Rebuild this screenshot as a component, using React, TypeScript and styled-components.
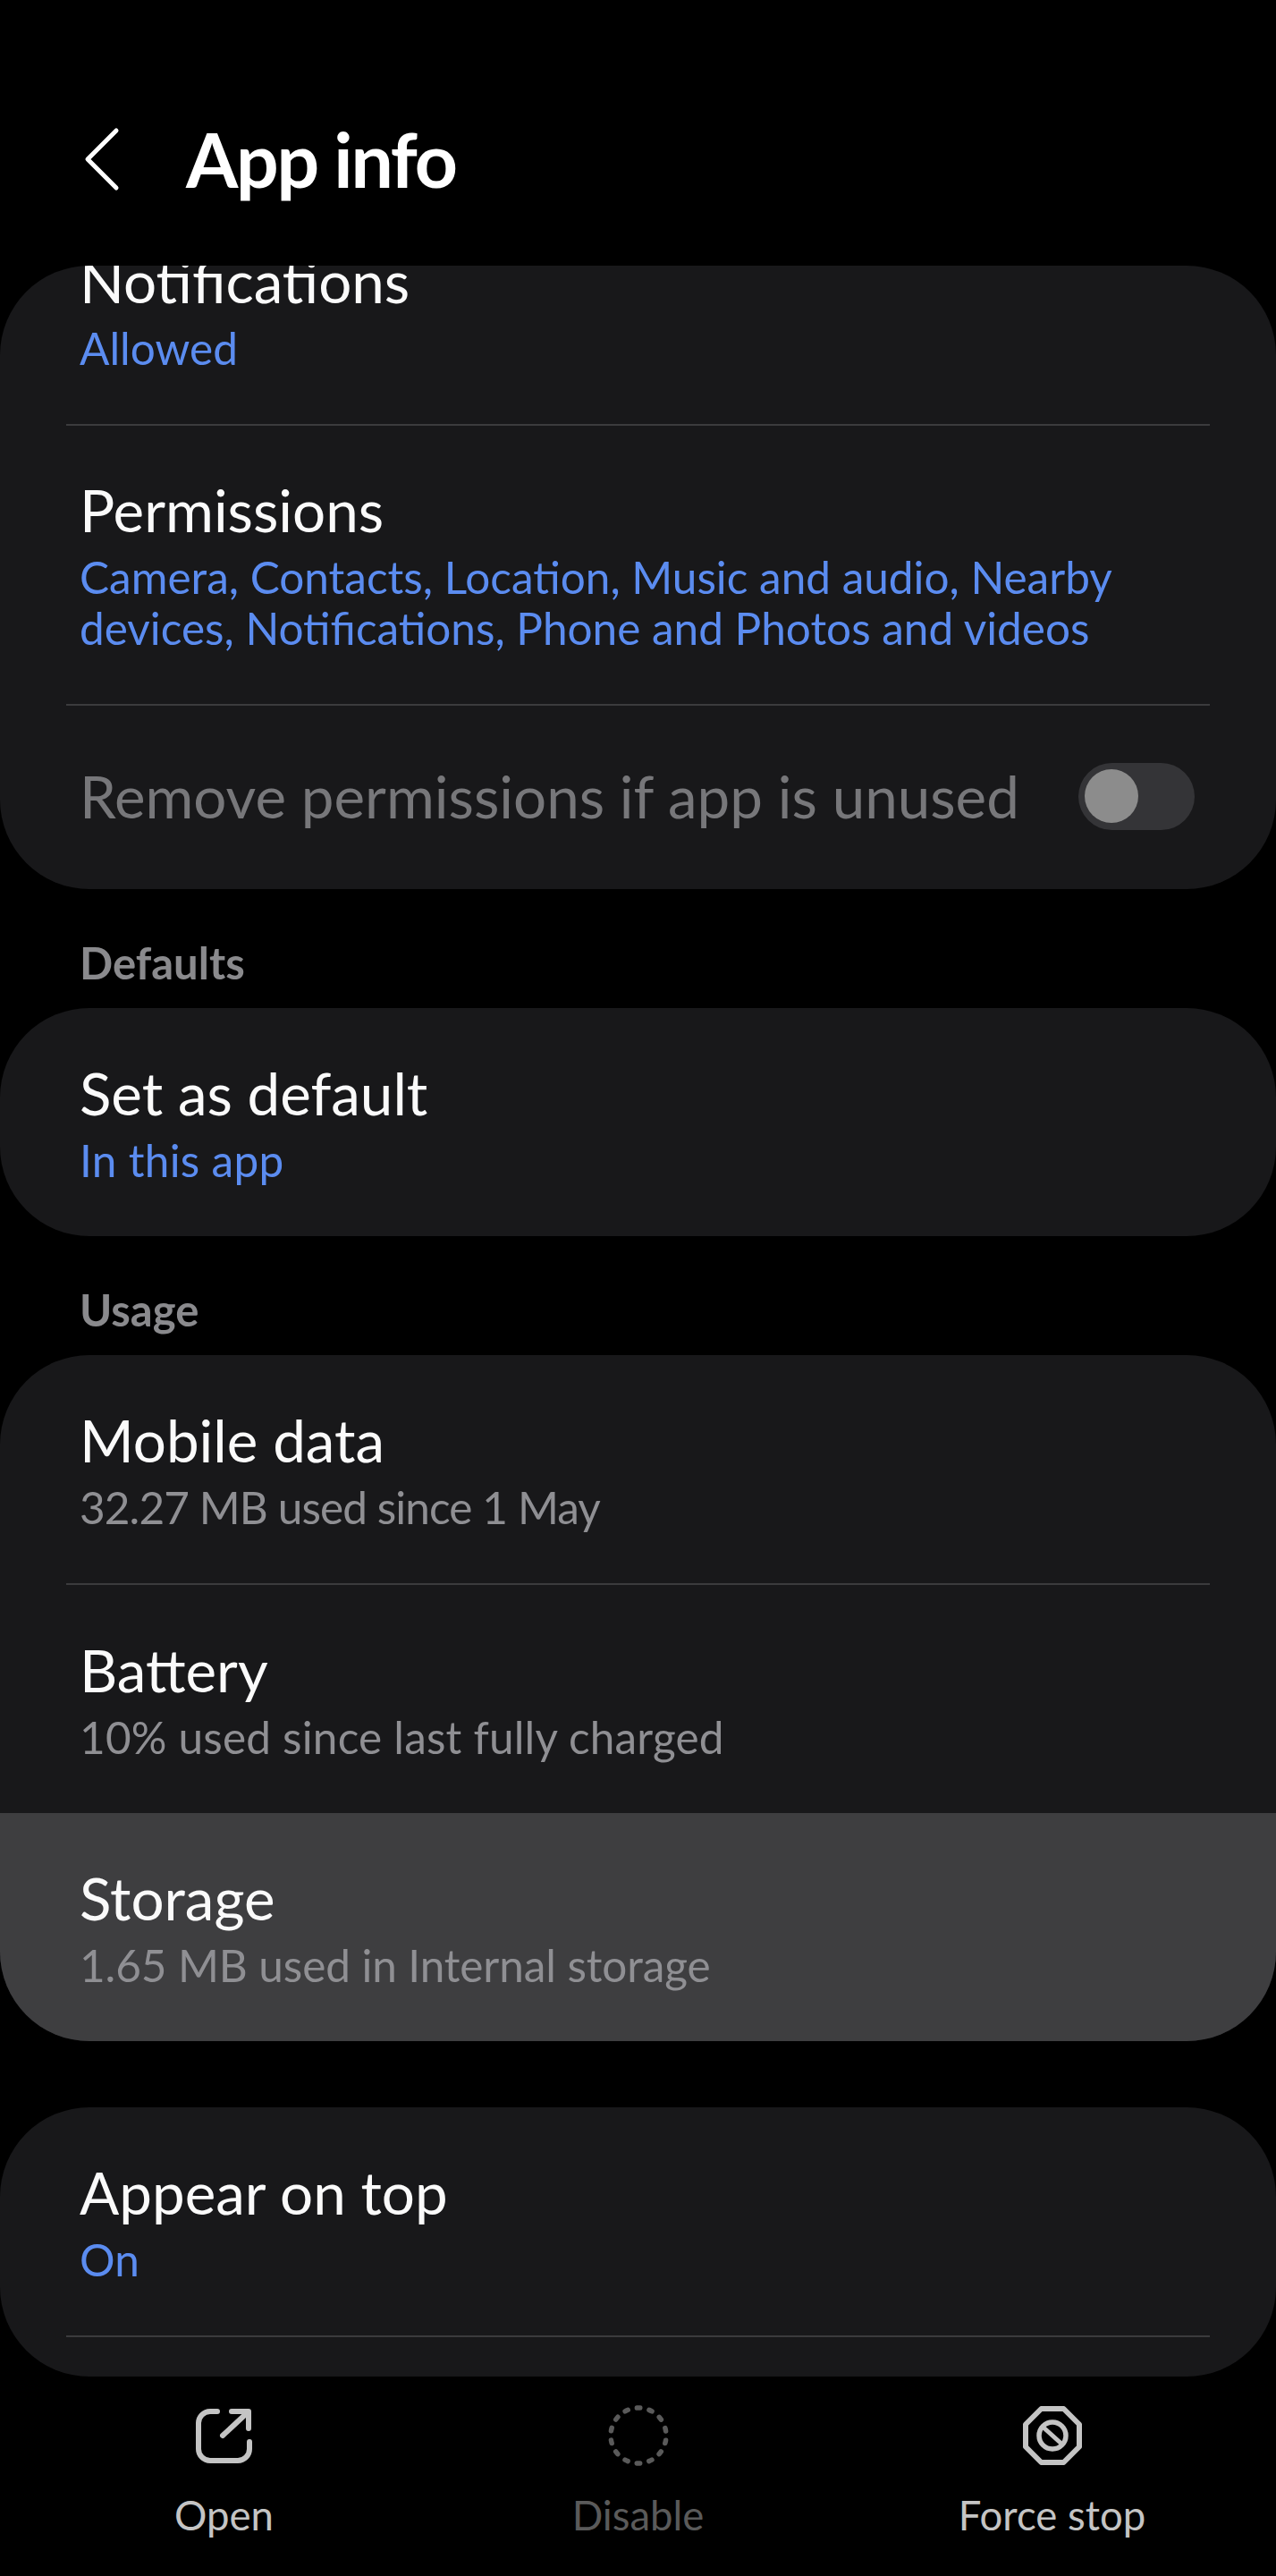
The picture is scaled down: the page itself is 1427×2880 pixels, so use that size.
import React from "react";
import styled, { createGlobalStyle } from "styled-components";

const Global = createGlobalStyle`
  html, body { margin: 0; padding: 0; background: #000; }
  * { box-sizing: border-box; }
`;

const Page = styled.div`
  width: 1427px;
  height: 2880px;
  background: #000;
  overflow: hidden;
  display: flex;
  flex-direction: column;
  font-family: Lato, "Noto Sans", sans-serif;
`;

const Header = styled.header`
  height: 297px;
  display: flex;
  align-items: center;
  padding: 58px 0 0 94px;
  gap: 72px;
`;

const HeaderTitle = styled.h1`
  margin: 0;
  font-size: 84px;
  font-weight: 700;
  color: #fff;
  letter-spacing: -2.2px;
`;

const Card = styled.section<{ $height?: number }>`
  background: #18181a;
  border-radius: 100px;
  overflow: hidden;
  ${(p) => (p.$height ? `height: ${p.$height}px;` : "")}
`;

const Row = styled.div<{ $active?: boolean; $offset?: number; $compact?: boolean }>`
  padding: ${(p) => (p.$compact ? "59px 89px 56px" : "60px 89px 56px")};
  display: flex;
  flex-direction: column;
  background: ${(p) => (p.$active ? "#3e3e40" : "transparent")};
  ${(p) => (p.$offset ? `margin-top: -${p.$offset}px;` : "")}
`;

const ToggleRow = styled.div`
  height: 205px;
  padding: 0 91px 3px 89px;
  display: flex;
  align-items: center;
  justify-content: space-between;
`;

const Title = styled.div<{ $muted?: boolean }>`
  font-size: 65.5px;
  line-height: 70px;
  color: ${(p) => (p.$muted ? "#77777a" : "#fafafa")};
`;

const Sub = styled.div<{ $blue?: boolean; $track?: number }>`
  margin-top: 12px;
  font-size: 49.5px;
  line-height: 57px;
  letter-spacing: ${(p) => p.$track ?? 0}px;
  color: ${(p) => (p.$blue ? "#5b8cf0" : "#8f8f93")};
`;

const Divider = styled.hr`
  margin: 0 74px;
  height: 2px;
  border: 0;
  background: #3b3b3d;
`;

const SectionLabel = styled.div`
  height: 133px;
  padding: 0 89px 21px;
  display: flex;
  align-items: flex-end;
  font-size: 49px;
  line-height: 60px;
  font-weight: 700;
  color: #8a8a8d;
`;

const Spacer = styled.div`
  height: 74px;
`;

const Toggle = styled.div`
  width: 130px;
  height: 75px;
  border-radius: 38px;
  background: #343437;
  padding: 7px;
`;

const Knob = styled.div`
  width: 60px;
  height: 60px;
  border-radius: 50%;
  background: #8c8c8c;
`;

const Nav = styled.nav`
  display: grid;
  grid-template-columns: repeat(3, 1fr);
  padding: 31px 19px 0;
`;

const NavItem = styled.div<{ $disabled?: boolean }>`
  display: flex;
  flex-direction: column;
  align-items: center;
  gap: 26px;
  color: ${(p) => (p.$disabled ? "#5a5a5a" : "#c4c4c4")};
`;

const NavLabel = styled.div`
  font-size: 45.5px;
  line-height: 56px;
`;

const OpenIcon = () => (
  <svg width="70" height="70" viewBox="0 0 70 70" fill="none" stroke="currentColor" strokeWidth="6" strokeLinecap="round" strokeLinejoin="round">
    <path d="M27 8H19a13 13 0 0 0-13 13v29a13 13 0 0 0 13 13h31a13 13 0 0 0 13-13V42" />
    <path d="M33 35L61 9M43 8h19v19" />
  </svg>
);

const DisableIcon = () => (
  <svg width="70" height="70" viewBox="0 0 70 70" fill="none" stroke="currentColor" strokeWidth="5.5" strokeLinecap="round" strokeDasharray="3.5 10.4" strokeDashoffset="-5.2">
    <circle cx="35" cy="35" r="31" />
  </svg>
);

const StopIcon = () => (
  <svg width="70" height="70" viewBox="0 0 70 70" fill="none" stroke="currentColor" strokeWidth="6" strokeLinejoin="round" strokeLinecap="round">
    <path d="M22.5 5h25L65 22.5v25L47.5 65h-25L5 47.5v-25z" />
    <circle cx="35" cy="35" r="15" strokeWidth="5.5" />
    <path d="M25 26l20 18" strokeWidth="5" />
  </svg>
);

const BackIcon = () => (
  <svg width="42" height="72" viewBox="0 0 42 72" fill="none" stroke="#fff" strokeWidth="5" strokeLinecap="round" strokeLinejoin="round">
    <path d="M36 4L4 36l32 32" />
  </svg>
);

export default function App() {
  return (
    <Page>
      <Global />
      <Header>
        <BackIcon />
        <HeaderTitle>App info</HeaderTitle>
      </Header>
      <Card>
        <Row $offset={78}>
          <Title>Notifications</Title>
          <Sub $blue>Allowed</Sub>
        </Row>
        <Divider />
        <Row $compact>
          <Title>Permissions</Title>
          <Sub $blue>Camera, Contacts, Location, Music and audio, Nearby devices, Notifications, Phone and Photos and videos</Sub>
        </Row>
        <Divider />
        <ToggleRow>
          <Title $muted>Remove permissions if app is unused</Title>
          <Toggle><Knob /></Toggle>
        </ToggleRow>
      </Card>
      <SectionLabel>Defaults</SectionLabel>
      <Card>
        <Row>
          <Title>Set as default</Title>
          <Sub $blue $track={0.3}>In this app</Sub>
        </Row>
      </Card>
      <SectionLabel>Usage</SectionLabel>
      <Card>
        <Row>
          <Title>Mobile data</Title>
          <Sub $track={-0.9}>32.27 MB used since 1 May</Sub>
        </Row>
        <Divider />
        <Row>
          <Title>Battery</Title>
          <Sub $track={0.2}>10% used since last fully charged</Sub>
        </Row>
        <Row $active>
          <Title>Storage</Title>
          <Sub $track={-0.1}>1.65 MB used in Internal storage</Sub>
        </Row>
      </Card>
      <Spacer />
      <Card $height={301}>
        <Row>
          <Title>Appear on top</Title>
          <Sub $blue>On</Sub>
        </Row>
        <Divider />
      </Card>
      <Nav>
        <NavItem><OpenIcon /><NavLabel>Open</NavLabel></NavItem>
        <NavItem $disabled><DisableIcon /><NavLabel>Disable</NavLabel></NavItem>
        <NavItem><StopIcon /><NavLabel>Force stop</NavLabel></NavItem>
      </Nav>
    </Page>
  );
}
